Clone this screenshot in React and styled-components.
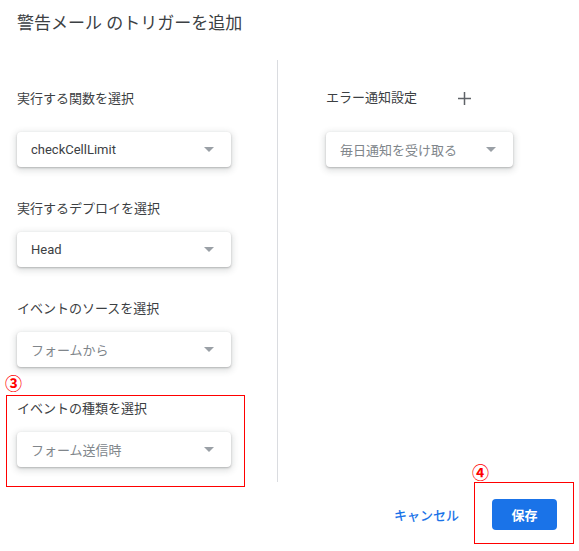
import React from "react";
import styled, { createGlobalStyle } from "styled-components";

const GlobalStyle = createGlobalStyle`
  body {
    margin: 0;
    background: #ffffff;
    font-family: Roboto, "Noto Sans CJK JP", "Noto Sans", sans-serif;
  }
`;

const Page = styled.div`
  position: relative;
  width: 579px;
  height: 551px;
  box-sizing: border-box;
  padding: 11px 22px 0 17px;
  overflow: hidden;
`;

const Title = styled.h2`
  margin: 0;
  font-size: 17px;
  line-height: 24px;
  font-weight: 400;
  color: #3c4043;
`;

const Body = styled.div`
  display: flex;
  margin-top: 25px;
  height: 422px;
`;

const LeftColumn = styled.div`
  width: 261px;
  border-right: 1px solid #dadce0;
  padding-top: 29px;
  display: flex;
  flex-direction: column;
  gap: 32px;
  box-sizing: border-box;
`;

const RightColumn = styled.div`
  flex: 1;
  padding: 28px 0 0 48px;
`;

const Field = styled.div`
  display: flex;
  flex-direction: column;
  gap: ${(p) => p.$gap || 13}px;
`;

const LabelRow = styled.div`
  display: flex;
  align-items: center;
  height: 20px;
`;

const Label = styled.div`
  font-size: 13px;
  line-height: 20px;
  color: #3c4043;
`;

const PlusButton = styled.span`
  display: inline-flex;
  margin-left: 41px;
  color: #5f6368;
`;

const Select = styled.div`
  width: ${(p) => p.$width}px;
  height: 35px;
  box-sizing: border-box;
  padding: 0 17px 0 14px;
  display: flex;
  align-items: center;
  justify-content: space-between;
  border-radius: 4px;
  background: #ffffff;
  box-shadow: 0 1px 2px rgba(60, 64, 67, 0.3), 0 2px 6px 2px rgba(60, 64, 67, 0.15);
  font-size: 13px;
  color: ${(p) => (p.$muted ? "#80868b" : "#3c4043")};
`;

const Caret = styled.span`
  width: 0;
  height: 0;
  border-left: 5px solid transparent;
  border-right: 5px solid transparent;
  border-top: 5px solid #9aa0a6;
`;

const Footer = styled.div`
  display: flex;
  justify-content: flex-end;
  align-items: center;
  margin-top: 17px;
  gap: 33px;
`;

const TextButton = styled.button`
  border: none;
  background: none;
  padding: 0;
  font-family: inherit;
  font-size: 13px;
  font-weight: 500;
  color: #1a73e8;
`;

const PrimaryButton = styled.button`
  width: 65px;
  height: 31px;
  border: none;
  border-radius: 4px;
  background: #1a73e8;
  color: #ffffff;
  font-family: inherit;
  font-size: 13px;
  font-weight: 700;
`;

const Highlight = styled.div`
  position: absolute;
  left: ${(p) => p.$x}px;
  top: ${(p) => p.$y}px;
  width: ${(p) => p.$w}px;
  height: ${(p) => p.$h}px;
  box-sizing: border-box;
  border: 1px solid #ff0000;
  pointer-events: none;
`;

const Marker = styled.span`
  position: absolute;
  left: ${(p) => p.$x}px;
  top: ${(p) => p.$y}px;
  font-family: "Noto Sans CJK JP", sans-serif;
  font-size: 17px;
  font-weight: 700;
  line-height: 1;
  color: #ff0000;
`;

const SelectBox = ({ value, muted, width = 214 }) => (
  <Select $muted={muted} $width={width}>
    <span>{value}</span>
    <Caret />
  </Select>
);

const fields = [
  { label: "実行する関数を選択", value: "checkCellLimit", gap: 23 },
  { label: "実行するデプロイを選択", value: "Head" },
  { label: "イベントのソースを選択", value: "フォームから", muted: true },
  { label: "イベントの種類を選択", value: "フォーム送信時", muted: true },
];

export default function App() {
  return (
    <>
      <GlobalStyle />
      <Page>
        <Title>警告メール のトリガーを追加</Title>
        <Body>
          <LeftColumn>
            {fields.map((f) => (
              <Field key={f.label} $gap={f.gap}>
                <LabelRow>
                  <Label>{f.label}</Label>
                </LabelRow>
                <SelectBox value={f.value} muted={f.muted} />
              </Field>
            ))}
          </LeftColumn>
          <RightColumn>
            <Field $gap={24}>
              <LabelRow>
                <Label>エラー通知設定</Label>
                <PlusButton>
                  <svg width="13" height="13" viewBox="0 0 13 13">
                    <path d="M6.5 0v13M0 6.5h13" stroke="currentColor" strokeWidth="1.5" />
                  </svg>
                </PlusButton>
              </LabelRow>
              <SelectBox value="毎日通知を受け取る" muted width={187} />
            </Field>
          </RightColumn>
        </Body>
        <Footer>
          <TextButton>キャンセル</TextButton>
          <PrimaryButton>保存</PrimaryButton>
        </Footer>

        <Marker $x={5} $y={374}>③</Marker>
        <Highlight $x={6} $y={395} $w={239} $h={92} />
        <Marker $x={472} $y={463}>④</Marker>
        <Highlight $x={474} $y={482} $w={100} $h={62} />
      </Page>
    </>
  );
}
